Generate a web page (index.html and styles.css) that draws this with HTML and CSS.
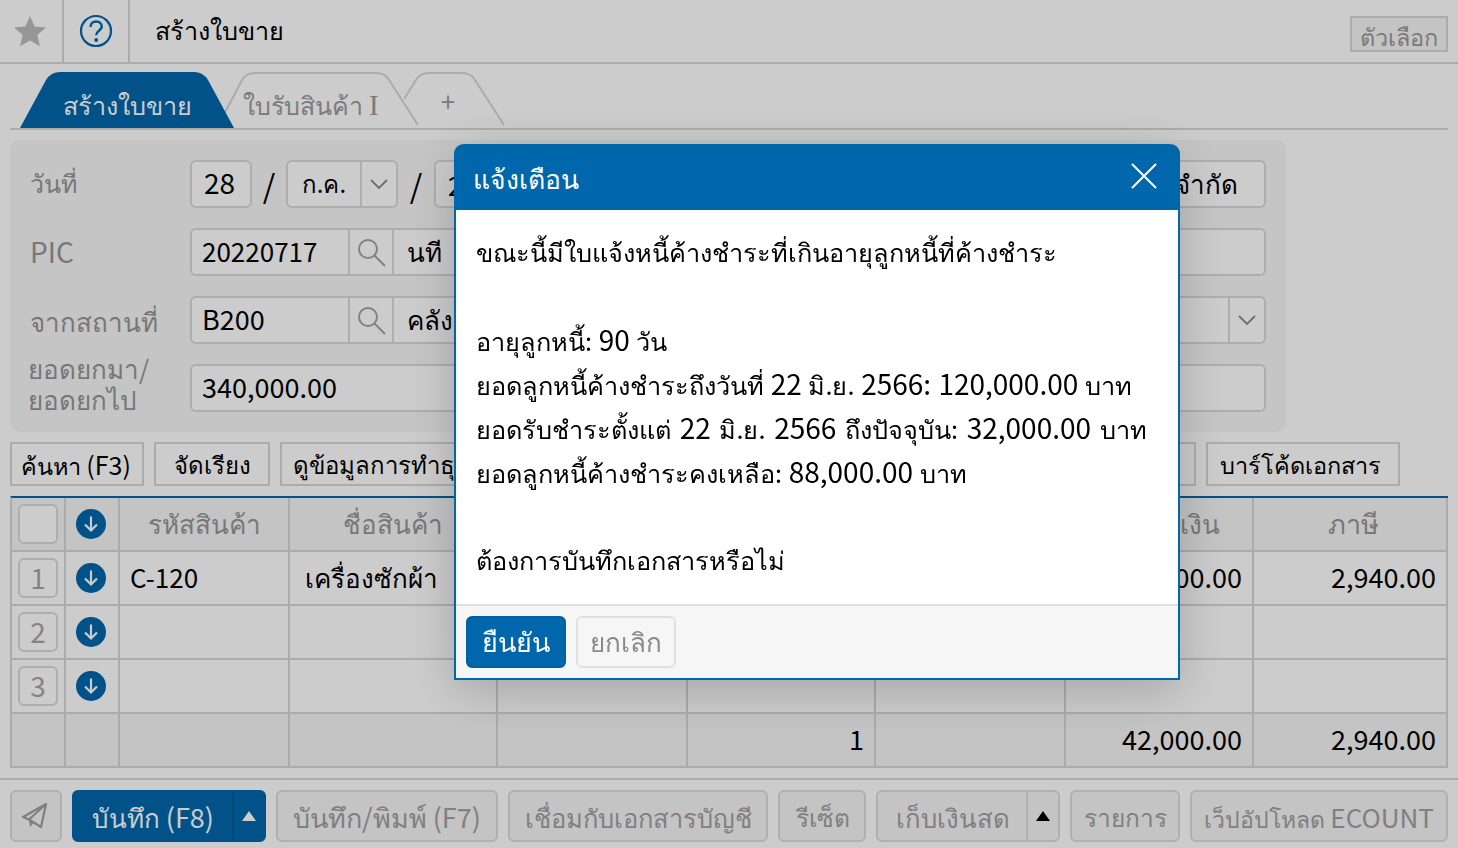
FILE: index.html
```html
<!DOCTYPE html>
<html lang="th">
<head>
<meta charset="utf-8">
<title>สร้างใบขาย</title>
<link rel="stylesheet" href="styles.css">
</head>
<body>
<div class="page">
  <header class="topbar">
    <div class="topcell star-cell">
      <svg width="34" height="34" viewBox="0 0 34 34"><path class="star" d="M17 2l4.600 10.600 11.400 1-8.700 7.500 2.700 11.200L17 26.400 7 32.300l2.700-11.200L1 13.600l11.400-1z"/></svg>
    </div>
    <div class="topcell help-cell">
      <svg width="34" height="34" viewBox="0 0 34 34"><circle class="help-ring" cx="17" cy="17" r="15"/><path class="help-mark" d="M11.500 13c0-3.400 2.500-5.500 5.700-5.500s5.500 2 5.500 4.800c0 2.200-1.300 3.400-3 4.600-1.700 1.200-2.500 2.100-2.500 4.400"/><circle class="help-dot" cx="17.200" cy="26" r="1.900"/></svg>
    </div>
    <h1 class="title">สร้างใบขาย</h1>
    <button class="opt-btn">ตัวเลือก</button>
  </header>

  <nav class="tabs">
    <div class="tab tab-active">
      <svg class="tab-shape" width="214" height="56" viewBox="0 0 214 56"><path class="shape-active" d="M0 56L26 8Q31 0 40 0H174Q183 0 188 8L214 56Z"/></svg>
      <span class="tab-label">สร้างใบขาย</span>
    </div>
    <div class="tab tab-second">
      <svg class="tab-shape" width="200" height="56" viewBox="0 0 200 56"><path class="shape-line" d="M0 54L24 8Q28 1 37 1H158Q167 1 171 8L200 53"/></svg>
      <span class="tab-label tab-muted">ใบรับสินค้า <span class="serif-i">I</span></span>
    </div>
    <div class="tab tab-third">
      <svg class="tab-shape" width="100" height="56" viewBox="0 0 100 56"><path class="shape-line" d="M0 27L12 8Q16 1 25 1H58Q67 1 71 8L100 53"/></svg>
      <span class="tab-label tab-muted tab-plus">+</span>
    </div>
  </nav>

  <section class="panel">
    <div class="row">
      <label class="label label-1">วันที่</label>
      <div class="field f-day"><span class="lift">28</span></div>
      <span class="slash">/</span>
      <div class="group g-month">
        <span class="seg seg-month">ก.ค.</span>
        <span class="seg seg-chev"><svg width="20" height="12" viewBox="0 0 20 12"><path class="chev" d="M2 2l8 8 8-8"/></svg></span>
      </div>
      <span class="slash slash-2">/</span>
      <div class="field f-year">2566</div>
      <div class="field f-limit">ไม่จำกัด</div>
    </div>
    <div class="row">
      <label class="label label-pic">PIC</label>
      <div class="group g-grow">
        <span class="seg seg-code"><span class="lift">20220717</span></span>
        <span class="seg seg-search"><svg width="30" height="30" viewBox="0 0 30 30"><circle class="search" cx="12" cy="12" r="9"/><path class="search" d="M18.500 18.500L29 29"/></svg></span>
        <span class="seg seg-name">นที</span>
      </div>
    </div>
    <div class="row">
      <label class="label label-3">จากสถานที่</label>
      <div class="group g-grow">
        <span class="seg seg-code"><span class="lift n">B200</span></span>
        <span class="seg seg-search"><svg width="30" height="30" viewBox="0 0 30 30"><circle class="search" cx="12" cy="12" r="9"/><path class="search" d="M18.500 18.500L29 29"/></svg></span>
        <span class="seg seg-name">คลังสินค้า</span>
        <span class="seg seg-chev seg-end"><svg width="20" height="12" viewBox="0 0 20 12"><path class="chev" d="M2 2l8 8 8-8"/></svg></span>
      </div>
    </div>
    <div class="row">
      <label class="label label-two">ยอดยกมา/<br>ยอดยกไป</label>
      <div class="field f-amount"><span class="lift n">340,000.00</span></div>
    </div>
  </section>

  <div class="toolbar">
    <button class="tool tool-search">ค้นหา <span class="n">(F3)</span></button>
    <button class="tool tool-sort">จัดเรียง</button>
    <button class="tool tool-view">ดูข้อมูลการทำธุรกรรม</button>
    <button class="tool tool-fill">)</button>
    <button class="tool tool-barcode">บาร์โค้ดเอกสาร</button>
  </div>

  <section class="grid">
    <div class="cell head center"><span class="checkbox"></span></div>
    <div class="cell head center"><svg class="down" width="30" height="30" viewBox="0 0 30 30"><circle class="down-bg" cx="15" cy="15" r="15"/><path class="down-arrow" d="M15 7.500v14M9 15.500l6 6 6-6"/></svg></div>
    <div class="cell head center gray">รหัสสินค้า</div>
    <div class="cell head center gray">ชื่อสินค้า</div>
    <div class="cell head"></div><div class="cell head"></div><div class="cell head"></div>
    <div class="cell head center gray">จำนวนเงิน</div>
    <div class="cell head center gray cell-tax">ภาษี</div>

    <div class="cell center"><span class="checkbox num">1</span></div>
    <div class="cell center"><svg class="down" width="30" height="30" viewBox="0 0 30 30"><circle class="down-bg" cx="15" cy="15" r="15"/><path class="down-arrow" d="M15 7.500v14M9 15.500l6 6 6-6"/></svg></div>
    <div class="cell"><span class="lift">C-120</span></div>
    <div class="cell cell-name">เครื่องซักผ้า</div>
    <div class="cell"></div><div class="cell"></div><div class="cell"></div>
    <div class="cell right"><span class="lift n">42,000.00</span></div>
    <div class="cell right"><span class="lift n">2,940.00</span></div>

    <div class="cell center"><span class="checkbox num">2</span></div>
    <div class="cell center"><svg class="down" width="30" height="30" viewBox="0 0 30 30"><circle class="down-bg" cx="15" cy="15" r="15"/><path class="down-arrow" d="M15 7.500v14M9 15.500l6 6 6-6"/></svg></div>
    <div class="cell"></div><div class="cell"></div><div class="cell"></div><div class="cell"></div><div class="cell"></div><div class="cell"></div><div class="cell"></div>

    <div class="cell center"><span class="checkbox num">3</span></div>
    <div class="cell center"><svg class="down" width="30" height="30" viewBox="0 0 30 30"><circle class="down-bg" cx="15" cy="15" r="15"/><path class="down-arrow" d="M15 7.500v14M9 15.500l6 6 6-6"/></svg></div>
    <div class="cell"></div><div class="cell"></div><div class="cell"></div><div class="cell"></div><div class="cell"></div><div class="cell"></div><div class="cell"></div>

    <div class="cell foot"></div><div class="cell foot"></div><div class="cell foot"></div><div class="cell foot"></div><div class="cell foot"></div>
    <div class="cell foot right"><span class="lift n">1</span></div>
    <div class="cell foot"></div>
    <div class="cell foot right"><span class="lift n">42,000.00</span></div>
    <div class="cell foot right"><span class="lift n">2,940.00</span></div>
  </section>

  <footer class="bottom">
    <button class="act act-send"><svg width="30" height="30" viewBox="0 0 30 30"><path class="plane" d="M25 3L2 16l6 2.500L25 3l-5 23-8-5-4-2.500"/><path class="plane-fold" d="M8 18.500L9 26l4-4.500z"/></svg></button>
    <div class="act act-primary">
      <span class="act-main">บันทึก <span class="n">(F8)</span></span>
      <span class="act-caret"><svg width="14" height="10" viewBox="0 0 14 10"><path class="caret-white" d="M7 0l7 10H0z"/></svg></span>
    </div>
    <button class="act act-print"><span class="act-text">บันทึก/พิมพ์ <span class="n">(F7)</span></span></button>
    <button class="act act-link"><span class="act-text">เชื่อมกับเอกสารบัญชี</span></button>
    <button class="act act-reset"><span class="act-text">รีเซ็ต</span></button>
    <div class="act act-cash">
      <span class="act-main">เก็บเงินสด</span>
      <span class="act-caret"><svg width="14" height="10" viewBox="0 0 14 10"><path class="caret-black" d="M7 0l7 10H0z"/></svg></span>
    </div>
    <button class="act act-list"><span class="act-text">รายการ</span></button>
    <button class="act act-web"><span class="act-text">เว็ปอัปโหลด <span class="n n-ecount">ECOUNT</span></span></button>
  </footer>
</div>

<div class="overlay"></div>

<div class="modal">
  <div class="modal-head">
    <span class="modal-title">แจ้งเตือน</span>
    <svg class="modal-close" width="26" height="26" viewBox="0 0 26 26"><path class="close-x" d="M1 1l24 24M25 1L1 25"/></svg>
  </div>
  <div class="modal-body">
    <p>ขณะนี้มีใบแจ้งหนี้ค้างชำระที่เกินอายุลูกหนี้ที่ค้างชำระ</p>
    <p class="blank"></p>
    <p>อายุลูกหนี้: <span class="n">90</span> วัน</p>
    <p>ยอดลูกหนี้ค้างชำระถึงวันที่ <span class="n">22</span> มิ.ย. <span class="n">2566: 120,000.00</span> บาท</p>
    <p class="wide">ยอดรับชำระตั้งแต่ <span class="n">22</span> มิ.ย. <span class="n">2566</span> ถึงปัจจุบัน: <span class="n">32,000.00</span> บาท</p>
    <p>ยอดลูกหนี้ค้างชำระคงเหลือ: <span class="n">88,000.00</span> บาท</p>
    <p class="blank"></p>
    <p>ต้องการบันทึกเอกสารหรือไม่</p>
  </div>
  <div class="modal-foot">
    <button class="m-btn m-ok">ยืนยัน</button>
    <button class="m-btn m-cancel">ยกเลิก</button>
  </div>
</div>
</body>
</html>
```

FILE: styles.css
```css
* { box-sizing: border-box; }
html, body { margin: 0; padding: 0; height: 100%; overflow: hidden; background: #fff; }
body, button { font-family: "Noto Sans CJK KR", sans-serif; font-size: 26px; color: #000; }
button { margin: 0; padding: 0; cursor: default; }
.page { width: 1458px; height: 848px; display: flex; flex-direction: column; background: #fff; }
.n { font-size: 27px; }
.lift { position: relative; top: -2px; }

/* top bar */
.topbar { height: 64px; flex: none; display: flex; align-items: center; border-bottom: 2px solid #d6d6d6; padding-right: 10px; }
.topcell { height: 62px; display: flex; align-items: center; justify-content: center; border-right: 2px solid #d6d6d6; flex: none; }
.star-cell { width: 64px; padding-right: 2px; }
.help-cell { width: 66px; }
.star { fill: #bcbcbc; }
.help-ring { fill: none; stroke: #0067ac; stroke-width: 2.200; }
.help-mark { fill: none; stroke: #0067ac; stroke-width: 2.400; }
.help-dot { fill: #0067ac; }
.title { font-size: 25.200px; font-weight: 400; margin: 0 0 0 25px; flex: 1; }
.opt-btn { width: 98px; height: 36px; margin-top: 6px; background: #f5f5f5; border: 2px solid #d6d6d6; color: #9a9a9a; line-height: 32px; font-size: 23.500px; padding-top: 2px; }

/* tabs */
.tabs { flex: none; height: 66px; margin: 0 10px; padding: 8px 0 0 10px; display: flex; border-bottom: 2px solid #d6d6d6; }
.tab { position: relative; height: 56px; display: flex; align-items: center; justify-content: center; flex: none; }
.tab-active { width: 214px; z-index: 3; font-size: 25.200px; }
.tab-second { width: 200px; margin-left: -16px; z-index: 2; padding-right: 14px; font-size: 25px; }
.tab-third { width: 100px; margin-left: -14px; z-index: 1; padding-right: 12px; }
.tab-shape { position: absolute; left: 0; top: 0; }
.shape-active { fill: #0067ac; }
.shape-line { fill: #fff; stroke: #d6d6d6; stroke-width: 2; }
.tab-label { position: relative; color: #fff; padding-top: 11px; }
.tab-muted { color: #9a9a9a; }
.tab-plus { padding-top: 0; }
.serif-i { font-family: "Liberation Serif", serif; font-size: 29px; }

/* form panel */
.panel { flex: none; width: 1276px; height: 292px; margin: 10px 0 0 10px; padding: 20px; background: #f7f7f7; border-radius: 10px; display: flex; flex-direction: column; gap: 20px; }
.row { height: 48px; display: flex; align-items: center; }
.label { width: 160px; flex: none; color: #959595; }
.label-1 { font-size: 25px; }
.label-pic { font-size: 28px; padding-bottom: 2px; }
.label-3 { padding-top: 4px; }
.label-two { line-height: 31px; margin-left: -2px; width: 162px; padding-bottom: 10px; }
.field, .group { height: 48px; background: #fff; border: 2px solid #dadada; border-radius: 6px; display: flex; align-items: center; }
.field { padding: 0 12px; }
.f-day { width: 62px; justify-content: center; padding: 0 3px 0 0; font-size: 28px; }
.slash { width: 34px; text-align: center; font-size: 32px; }
.slash-2 { width: 36px; }
.g-month { width: 112px; }
.seg { height: 100%; display: flex; align-items: center; flex: none; }
.seg-month { flex: 1; justify-content: center; font-size: 24px; }
.seg-chev { width: 36px; justify-content: center; border-left: 2px solid #dadada; }
.f-year { width: 90px; }
.f-limit { flex: 1; margin-left: 20px; justify-content: flex-end; padding-right: 26px; }
.g-grow { flex: 1; }
.seg-code { width: 156px; padding-left: 10px; }
.seg-search { width: 46px; justify-content: center; border-left: 2px solid #dadada; border-right: 2px solid #dadada; }
.seg-name { flex: 1; padding-left: 13px; }
.f-amount { flex: 1; padding-left: 10px; }
.chev { fill: none; stroke: #8a8a8a; stroke-width: 1.800; }
.search { fill: none; stroke: #a3a3a3; stroke-width: 2; }

/* toolbar */
.toolbar { flex: none; height: 44px; margin-top: 10px; padding: 0 58px 0 10px; display: flex; gap: 10px; }
.tool { height: 44px; background: #fff; border: 2px solid #d6d6d6; color: #000; padding: 0 12px; white-space: nowrap; flex: none; line-height: 38px; font-size: 24px; }
.tool-search { width: 134px; padding: 0 2px 0 0; font-size: 23.500px; }
.tool-search .n { font-size: 25px; }
.tool-sort { width: 116px; }
.tool-view { width: 280px; text-align: left; padding-left: 11px; }
.tool-fill { flex: 1; text-align: right; padding-right: 14px; color: #9a9a9a; }
.tool-barcode { width: 194px; font-size: 23.500px; padding: 0 6px 0 0; }

/* grid */
.grid { flex: none; margin: 10px 10px 0; border-top: 2px solid #0067ac; border-left: 2px solid #d6d6d6; display: grid; grid-template-columns: 54px 54px 170px 208px 190px 188px 190px 188px 194px; grid-template-rows: repeat(5, 54px); }
.cell { border-right: 2px solid #d6d6d6; border-bottom: 2px solid #d6d6d6; display: flex; align-items: center; padding: 0 10px; white-space: nowrap; background: #fff; }
.head { background: #f5f5f5; }
.foot { background: #f5f5f5; }
.center { justify-content: center; padding: 0; }
.right { justify-content: flex-end; padding-right: 10px; }
.gray { color: #959595; }
.cell-tax { font-size: 27px; padding-left: 6px; }
.cell-name { padding-left: 15px; }
.checkbox { width: 40px; height: 40px; border: 2px solid #dadada; border-radius: 6px; background: #fff; display: flex; align-items: center; justify-content: center; color: #a6a6a6; font-size: 28px; }
.num { padding-bottom: 2px; }
.down { margin-right: 2px; }
.down-bg { fill: #0067ac; }
.down-arrow { fill: none; stroke: #fff; stroke-width: 2.200; }

/* bottom */
.bottom { flex: none; height: 70px; margin-top: 10px; border-top: 2px solid #d6d6d6; padding: 10px 10px 0; display: flex; gap: 10px; }
.act { height: 52px; border: 2px solid #dcdcdc; border-radius: 6px; background: #f5f5f5; color: #a0a0a0; display: flex; align-items: center; justify-content: center; flex: none; white-space: nowrap; }
.act-text, .act-main { padding-top: 4px; }
.act-send { width: 52px; }
.plane { fill: none; stroke: #a0a0a0; stroke-width: 2.200; stroke-linejoin: round; }
.plane-fold { fill: #a0a0a0; }
.act-primary { width: 194px; background: #0067ac; border-color: #0067ac; color: #fff; }
.act-main { flex: 1; text-align: center; }
.act-caret { width: 32px; height: 100%; display: flex; align-items: center; justify-content: center; border-left: 2px solid #005a98; }
.caret-white { fill: #fff; }
.caret-black { fill: #000; }
.act-print { width: 222px; font-size: 27px; }
.act-link { width: 260px; font-size: 25.500px; }
.act-reset { width: 88px; font-size: 24.600px; padding-left: 2px; }
.act-cash { width: 184px; font-size: 25.700px; padding-left: 2px; }
.act-cash .act-caret { border-left-color: #dcdcdc; }
.act-list { width: 110px; font-size: 24.500px; }
.act-web { width: 258px; font-size: 23px; }
.n-ecount { font-size: 26px; }

/* modal */
.overlay { position: fixed; inset: 0; z-index: 10; background: rgba(0, 0, 0, .2); }
.modal { position: fixed; z-index: 11; left: 454px; top: 144px; width: 726px; height: 536px; background: #fff; border: 2px solid #0067ac; border-top: 0; border-radius: 10px 10px 0 0; box-shadow: 0 10px 50px rgba(0, 0, 0, .2); display: flex; flex-direction: column; }
.modal-head { flex: none; height: 66px; margin: 0 -2px; background: #0067ac; border-radius: 10px 10px 0 0; color: #fff; display: flex; align-items: center; justify-content: space-between; padding: 2px 23px 0 19px; font-size: 26.500px; }
.modal-title { padding-top: 2px; }
.modal-close { margin-top: -4px; }
.close-x { stroke: #fff; stroke-width: 2; fill: none; }
.modal-body { flex: 1; padding: 19px 20px 0; font-size: 25.300px; word-spacing: 1px; }
.modal-body p { margin: 0; height: 44px; line-height: 44px; white-space: nowrap; }
.modal-body .wide { word-spacing: 3px; }
.modal-body .n { font-size: 28px; }
.modal-foot { flex: none; height: 74px; background: #f6f6f6; border-top: 2px solid #e0e0e0; padding: 10px; display: flex; gap: 10px; }
.m-btn { width: 100px; height: 52px; border-radius: 6px; }
.m-ok { background: #0067ac; border: 2px solid #0060a0; color: #fff; font-size: 27px; }
.m-cancel { background: #f6f6f6; border: 2px solid #e0e0e0; color: #8a8a8a; }
```
